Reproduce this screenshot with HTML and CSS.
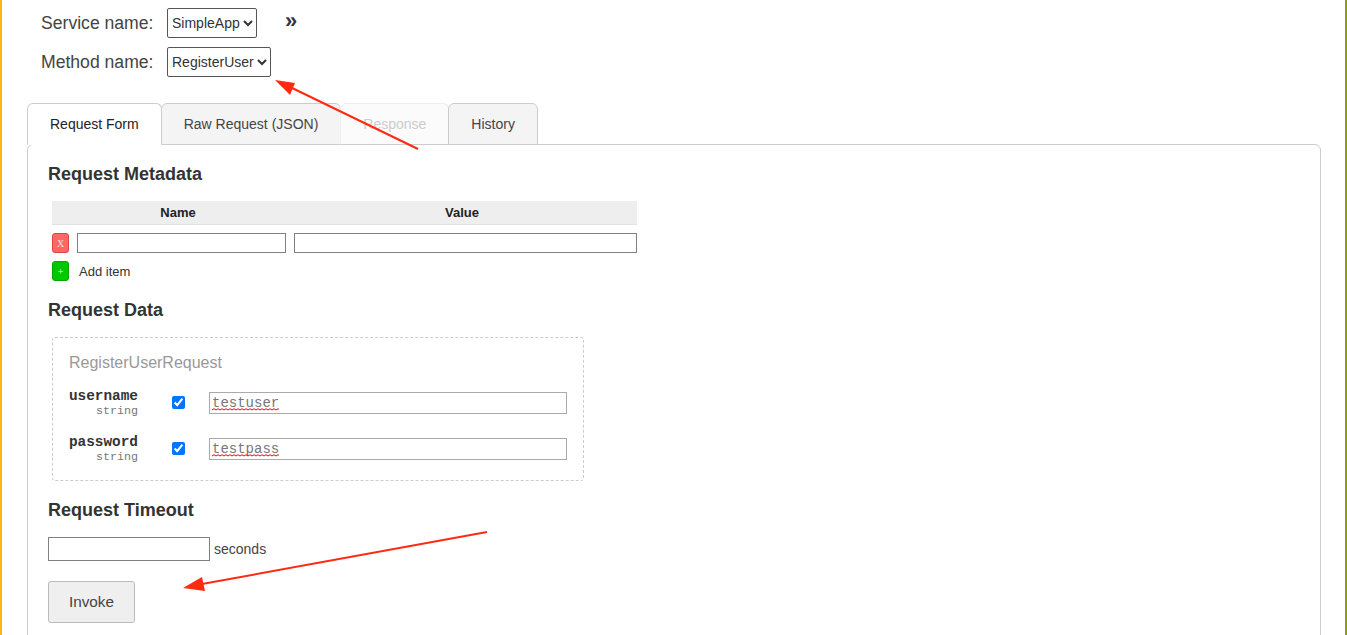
FILE: index.html
```html
<!DOCTYPE html>
<html lang="en">
<head>
<meta charset="utf-8">
<title>gRPC UI</title>
<link rel="stylesheet" href="styles.css">
</head>
<body>
<div class="page">
  <div class="selectors">
    <div class="sel-row">
      <label class="sel-label">Service name:</label>
      <select class="sel"><option>SimpleApp</option></select>
      <span class="chev">»</span>
    </div>
    <div class="sel-row">
      <label class="sel-label">Method name:</label>
      <select class="sel"><option>RegisterUser</option></select>
    </div>
  </div>
  <div class="tabs">
    <div class="tab active">Request Form</div>
    <div class="tab">Raw Request (JSON)</div>
    <div class="tab disabled">Response</div>
    <div class="tab">History</div>
  </div>
  <div class="panel">
    <h3 class="heading first">Request Metadata</h3>
    <div class="meta">
      <div class="meta-head"><span class="col-name">Name</span><span class="col-value">Value</span></div>
      <div class="meta-row">
        <button class="sq red">X</button>
        <input class="meta-name" type="text">
        <input class="meta-value" type="text">
      </div>
      <div class="meta-row add">
        <button class="sq green">+</button>
        <span class="add-label">Add item</span>
      </div>
    </div>
    <h3 class="heading data">Request Data</h3>
    <div class="msg">
      <div class="msg-title">RegisterUserRequest</div>
      <div class="field">
        <div class="fname"><b>username</b><span>string</span></div>
        <input class="check" type="checkbox" checked>
        <div class="fwrap">
          <input class="finput" type="text" value="testuser">
          <svg class="squiggle" width="67" height="3" viewBox="0 0 67 3"><path d="M0 2 L2 0.7 L4 2 L6 0.7 L8 2 L10 0.7 L12 2 L14 0.7 L16 2 L18 0.7 L20 2 L22 0.7 L24 2 L26 0.7 L28 2 L30 0.7 L32 2 L34 0.7 L36 2 L38 0.7 L40 2 L42 0.7 L44 2 L46 0.7 L48 2 L50 0.7 L52 2 L54 0.7 L56 2 L58 0.7 L60 2 L62 0.7 L64 2 L66 0.7 L67 1.4"/></svg>
        </div>
      </div>
      <div class="field">
        <div class="fname"><b>password</b><span>string</span></div>
        <input class="check" type="checkbox" checked>
        <div class="fwrap">
          <input class="finput" type="text" value="testpass">
          <svg class="squiggle" width="67" height="3" viewBox="0 0 67 3"><path d="M0 2 L2 0.7 L4 2 L6 0.7 L8 2 L10 0.7 L12 2 L14 0.7 L16 2 L18 0.7 L20 2 L22 0.7 L24 2 L26 0.7 L28 2 L30 0.7 L32 2 L34 0.7 L36 2 L38 0.7 L40 2 L42 0.7 L44 2 L46 0.7 L48 2 L50 0.7 L52 2 L54 0.7 L56 2 L58 0.7 L60 2 L62 0.7 L64 2 L66 0.7 L67 1.4"/></svg>
        </div>
      </div>
    </div>
    <h3 class="heading timeout">Request Timeout</h3>
    <div class="timeout-row"><input class="tinput" type="text"> <span>seconds</span></div>
    <button class="invoke">Invoke</button>
  </div>
</div>
<svg class="overlay" width="1347" height="635" viewBox="0 0 1347 635">
  <path class="arrow" d="M418 149 L288 86"/>
  <polygon class="head" points="275,80 295,83 290,95"/>
  <path class="arrow" d="M487 532 L202 584"/>
  <polygon class="head" points="183,588 202,577 205,591"/>
</svg>
</body>
</html>
```
FILE: styles.css
```css
* { box-sizing: border-box; }
html, body { margin: 0; height: 635px; overflow: hidden; background: #fff; }
body { font-family: "Liberation Sans", Arial, sans-serif; color: #333; position: relative; }
.page {
  height: 635px;
  border-left: 2px solid #fdb515;
  border-right: 2px solid #8f9e00;
  padding: 8px 24px 0 25px;
  overflow: hidden;
}
.selectors { padding-left: 14px; }
.sel-row { display: flex; align-items: center; height: 29px; margin-bottom: 10px; }
.sel-label { width: 126px; font-size: 17.6px; color: #444; margin-top: 2px; }
.sel {
  height: 30px; font: 14px "Liberation Sans", Arial, sans-serif; color: #333; background: #fff;
  border: 1px solid #555; border-radius: 2px; padding: 0;
}
.chev { margin-left: 28px; margin-top: -4px; font-size: 22px; font-weight: bold; color: #334; }
.tabs { display: flex; margin-top: 27px; position: relative; z-index: 1; }
.tab {
  height: 42px; padding: 0 22px; margin-right: -1px; border: 1px solid #ccc; border-radius: 6px 6px 0 0;
  background: #f4f4f4; font-size: 14px; line-height: 40px; color: #444;
}
.tab.active { background: #fff; border-bottom-color: #fff; color: #222; }
.tab.disabled { background: #fbfbfb; color: #ccc; border-color: #eee; border-bottom-color: #ccc; }
.panel { border: 1px solid #ccc; border-radius: 6px; margin-top: -1px; padding: 0 20px; height: 520px; }
.heading { margin: 0; font-size: 18px; line-height: 22px; color: #333; font-weight: bold; }
.heading.first { margin-top: 18px; }
.heading.data { margin-top: 18px; }
.heading.timeout { margin-top: 18px; }
.meta { margin: 16px 0 0 4px; width: 585px; }
.meta-head { display: flex; background: #eee; height: 24px; border-bottom: 1px solid #e2e2e2; font-size: 13px; font-weight: bold; line-height: 23px; color: #222; text-align: center; }
.col-name { width: 252px; }
.col-value { width: 316px; }
.meta-row { display: flex; align-items: center; margin-top: 8px; }
.meta-row.add { margin-top: 8px; }
.sq { width: 17px; height: 20px; border-radius: 3px; padding: 0; font-size: 10px; color: #fff; font-family: "Liberation Serif", serif; }
.red { background: #ff6666; border: 1px solid #d44; color: #fdd; }
.green { background: #00c800; border: 1px solid #0a0; }
.meta-name { width: 209px; height: 20px; margin-left: 8px; border: 1px solid #808080; padding: 0; }
.meta-value { width: 343px; height: 20px; margin-left: 8px; border: 1px solid #808080; padding: 0; }
.add-label { margin-left: 10px; font-size: 13px; color: #333; }
.msg { margin: 16px 0 0 4px; width: 532px; height: 144px; border: 1px dashed #ccc; border-radius: 3px; padding: 15px 16px 0; }
.msg-title { font-size: 16px; line-height: 20px; color: #999; }
.field { display: flex; align-items: flex-start; height: 46px; }
.msg-title + .field { margin-top: 19px; }
.fname { width: 69px; margin-top: -3px; display: flex; flex-direction: column; align-items: flex-end; font-family: "Liberation Mono", monospace; }
.fname b { font-size: 14.4px; line-height: 15px; color: #333; }
.fname span { font-size: 11.7px; line-height: 14px; color: #777; }
.check { width: 13px; height: 13px; margin: 4px 0 0 34px; accent-color: #0075ff; }
.fwrap { position: relative; width: 358px; height: 22px; margin-left: 24px; }
.finput { display: block; width: 358px; height: 22px; border: 1px solid #aaa; padding: 0 2px; font: 14px/20px "Liberation Mono", monospace; color: #777; }
.squiggle { position: absolute; left: 3px; top: 16px; }
.squiggle path { fill: none; stroke: #f00; stroke-width: 1; }
.timeout-row { display: flex; align-items: center; gap: 4px; margin-top: 16px; font-size: 14px; color: #444; }
.tinput { width: 162px; height: 24px; border: 1px solid #808080; padding: 0; }
.invoke { display: block; margin-top: 20px; width: 87px; height: 42px; background: #efefef; border: 1px solid #bbb; border-radius: 3px; font: 15.3px "Liberation Sans", Arial, sans-serif; color: #444; }
.overlay { position: absolute; left: 0; top: 0; z-index: 2; pointer-events: none; }
.arrow { stroke: #ff2a10; stroke-width: 2; fill: none; }
.head { fill: #ff2a10; }
```
